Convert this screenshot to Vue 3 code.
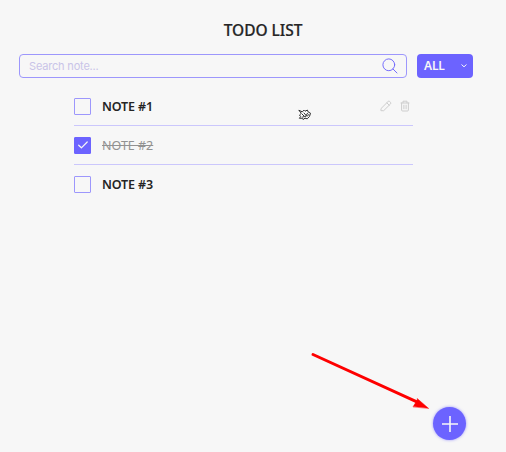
<script setup>
import { ref } from 'vue'

const query = ref('')
const notes = ref([
  { id: 1, title: 'NOTE #1', done: false, hovered: true },
  { id: 2, title: 'NOTE #2', done: true, hovered: false },
  { id: 3, title: 'NOTE #3', done: false, hovered: false },
])
</script>

<template>
  <main class="page">
    <h1 class="title">TODO LIST</h1>
    <div class="toolbar">
      <label class="search">
        <input v-model="query" class="search-input" type="text" placeholder="Search note..." />
        <svg class="search-icon" viewBox="0 0 16 16">
          <circle cx="6.8" cy="6.8" r="5.9" />
          <path d="M11 11l4 4" />
        </svg>
      </label>
      <button class="filter">
        <span>ALL</span>
        <svg class="chevron" viewBox="0 0 6 4"><path d="M.8.8L3 2.8 5.2.8" /></svg>
      </button>
    </div>

    <ul class="notes">
      <li v-for="note in notes" :key="note.id" class="note" :class="{ done: note.done }">
        <span class="box">
          <svg v-if="note.done" class="check" viewBox="0 0 10 8"><path d="M.7 4.2L3.4 6.8 9.2 1" /></svg>
        </span>
        <span class="name">{{ note.title }}</span>
        <span v-if="note.hovered" class="actions">
          <svg class="pencil" viewBox="0 0 12 12">
            <path d="M1.3 8.3L8.1 1.5Q8.9.7 9.7 1.5L10.5 2.3Q11.3 3.1 10.5 3.9L3.7 10.7H1.3ZM6.9 2.9l2.3 2.3" />
          </svg>
          <svg class="trash" viewBox="0 0 10 12">
            <path d="M1 3h8M3 2.8V1.2h4v1.6M1.6 3v7q0 1 1 1h4.8q1 0 1-1V3M3.9 5.2v3.6M6.1 5.2v3.6" />
          </svg>
        </span>
      </li>
    </ul>

    <svg class="cursor" viewBox="0 0 14 12">
      <path d="M1.2 1.4L4.2 2.8 6 1.2 7 2.2 9.4 1.1 10.2 3 12.5 4.2 11.5 7.4 9.2 9.8 7 9.2 5 10.5 4.2 9.2 1.4 9.3 2.7 7.6 1.5 6 3 4.6Z" />
      <path d="M4 5l2 2M6 4l2.2 2.6M9.5 4.2L7.4 8M4.5 8.1l2-.7M9.4 7.2l1.2-1.6" />
    </svg>

    <svg class="arrow" viewBox="0 0 120 60">
      <path class="shaft" d="M3 4.5L108 52.3" />
      <path class="head" d="M118.4 58.2L107.2 48.5 107.3 50 103.2 56.6Z" />
    </svg>

    <button class="add" aria-label="Add note">
      <svg viewBox="0 0 16 16"><path d="M8 .3v15.4M.3 8h15.4" /></svg>
    </button>
  </main>
</template>

<style>
body {
  margin: 0;
  background: #f7f7f7;
}
</style>

<style scoped>
.page {
  position: relative;
  box-sizing: border-box;
  width: 506px;
  height: 452px;
  padding: 20px 33px 0 19px;
  overflow: hidden;
  background: #f7f7f7;
  color: #252525;
  font-family: "Noto Sans", "Open Sans", sans-serif;
}
svg {
  display: block;
  fill: none;
  stroke: currentColor;
  stroke-linecap: round;
  stroke-linejoin: round;
}
.title {
  margin: 0 -19px 14px 15px;
  text-align: center;
  font-size: 15.5px;
  line-height: 20px;
  font-weight: 500;
  letter-spacing: -0.05px;
  -webkit-text-stroke: 0.2px currentColor;
}
.toolbar {
  display: flex;
  gap: 10px;
  height: 24px;
}
.search {
  box-sizing: border-box;
  display: flex;
  align-items: center;
  width: 388px;
  padding: 0 8px 0 9px;
  border: 1px solid #9d97fc;
  border-radius: 4px;
}
.search-input {
  flex: 1;
  min-width: 0;
  padding: 0;
  border: 0;
  outline: 0;
  background: transparent;
  font: 11px/16px Inter, sans-serif;
  letter-spacing: -0.18px;
}
.search-input::placeholder {
  color: #c9c4e8;
  opacity: 1;
}
.search-icon {
  width: 16px;
  height: 16px;
  color: #756dfd;
}
.filter {
  display: flex;
  align-items: center;
  justify-content: space-between;
  width: 56px;
  padding: 0 6px 0 7px;
  border: 0;
  border-radius: 4px;
  background: #6c63ff;
  color: #f7f7f7;
  font: 600 12px/16px "Noto Sans", sans-serif;
  letter-spacing: -0.15px;
}
.chevron {
  width: 6px;
  height: 4px;
}
.notes {
  width: 339px;
  margin: 9px 0 0 55px;
  padding: 0;
  list-style: none;
}
.note {
  box-sizing: border-box;
  display: flex;
  align-items: center;
  height: 39px;
  border-bottom: 1px solid #cbc7fc;
}
.note:last-child {
  border-color: transparent;
}
.box {
  box-sizing: border-box;
  display: flex;
  align-items: center;
  justify-content: center;
  width: 17px;
  height: 17px;
  margin-right: 11px;
  border: 1px solid #9d97fc;
  border-radius: 1px;
}
.name {
  padding-top: 2px;
  font-size: 12.5px;
  line-height: 18px;
  font-weight: 600;
  letter-spacing: -0.15px;
}
.done .box {
  border-color: #6c63ff;
  background: #6c63ff;
  color: #f7f7f7;
}
.done .name {
  color: #929292;
  font-weight: 400;
  letter-spacing: 0;
  text-decoration: line-through;
}
.check {
  width: 10px;
  height: 8px;
  stroke-width: 1.2;
}
.actions {
  display: flex;
  align-items: center;
  gap: 8px;
  margin-left: auto;
  padding-right: 3px;
  color: #cdcdcd;
}
.pencil {
  width: 12px;
  height: 12px;
}
.trash {
  width: 10px;
  height: 12px;
}
.cursor {
  position: absolute;
  left: 298px;
  top: 109px;
  width: 14px;
  height: 12px;
  fill: #fff;
  color: #303030;
  stroke-width: 1;
}
.arrow {
  position: absolute;
  left: 310px;
  top: 350px;
  width: 120px;
  height: 60px;
  color: #fe0000;
}
.shaft {
  stroke-width: 3;
}
.head {
  fill: #fe0000;
  stroke-width: 0.5;
}
.add {
  position: absolute;
  left: 433px;
  top: 407px;
  display: flex;
  align-items: center;
  justify-content: center;
  width: 33px;
  height: 33px;
  padding: 0;
  border: 0;
  border-radius: 50%;
  background: #6c63ff;
  box-shadow: 0 0 3px #6c63ffb0;
  color: #f7f7f7;
}
.add svg {
  width: 16px;
  height: 16px;
  stroke-width: 1.6;
}
</style>
